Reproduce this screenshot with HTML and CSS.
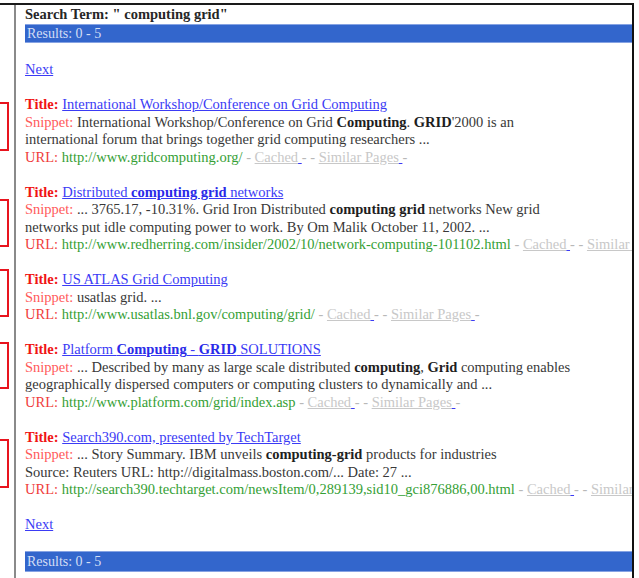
FILE: index.html
```html
<!DOCTYPE html>
<html>
<head>
<meta charset="utf-8">
<title>Search results</title>
<link rel="stylesheet" href="styles.css">
</head>
<body>
<div class="sheet">
  <div class="frame">
    <div class="query">Search Term: " computing grid"</div>
    <div class="bar">Results: 0 - 5</div>
    <div class="nav nav-top"><a href="#">Next</a></div>

    <div class="result r1">
      <div class="line"><span class="lbl-title">Title:</span> <a class="title" href="#">International Workshop/Conference on Grid Computing</a></div>
      <div class="line"><span class="lbl-snip">Snippet:</span> International Workshop/Conference on Grid <b>Computing</b>. <b>GRID</b>'2000 is an<br>international forum that brings together grid computing researchers ...</div>
      <div class="line url"><span class="lbl-url">URL:</span> <span class="addr">http://www.gridcomputing.org/</span> <span class="sep">-</span> <a class="aux" href="#"><span class="word">Cached</span><span class="tail">&nbsp;</span></a><span class="sep">- -</span> <a class="aux" href="#"><span class="word">Similar Pages</span><span class="tail">&nbsp;</span></a><span class="sep">-</span></div>
    </div>

    <div class="result r2">
      <div class="line"><span class="lbl-title">Title:</span> <a class="title" href="#">Distributed <b>computing grid</b> networks</a></div>
      <div class="line"><span class="lbl-snip">Snippet:</span> ... 3765.17, -10.31%. Grid Iron Distributed <b>computing grid</b> networks New grid<br>networks put idle computing power to work. By Om Malik October 11, 2002. ...</div>
      <div class="line url"><span class="lbl-url">URL:</span> <span class="addr">http://www.redherring.com/insider/2002/10/network-computing-101102.html</span> <span class="sep">-</span> <a class="aux" href="#"><span class="word">Cached</span><span class="tail">&nbsp;</span></a><span class="sep">- -</span> <a class="aux" href="#"><span class="word">Similar Pages</span><span class="tail">&nbsp;</span></a><span class="sep">-</span></div>
    </div>

    <div class="result r3">
      <div class="line"><span class="lbl-title">Title:</span> <a class="title" href="#">US ATLAS Grid Computing</a></div>
      <div class="line"><span class="lbl-snip">Snippet:</span> usatlas grid. ...</div>
      <div class="line url"><span class="lbl-url">URL:</span> <span class="addr">http://www.usatlas.bnl.gov/computing/grid/</span> <span class="sep">-</span> <a class="aux" href="#"><span class="word">Cached</span><span class="tail">&nbsp;</span></a><span class="sep">- -</span> <a class="aux" href="#"><span class="word">Similar Pages</span><span class="tail">&nbsp;</span></a><span class="sep">-</span></div>
    </div>

    <div class="result r4">
      <div class="line"><span class="lbl-title">Title:</span> <a class="title" href="#">Platform <b>Computing</b> - <b>GRID</b> SOLUTIONS</a></div>
      <div class="line"><span class="lbl-snip">Snippet:</span> ... Described by many as large scale distributed <b>computing</b>, <b>Grid</b> computing enables<br>geographically dispersed computers or computing clusters to dynamically and ...</div>
      <div class="line url"><span class="lbl-url">URL:</span> <span class="addr">http://www.platform.com/grid/index.asp</span> <span class="sep">-</span> <a class="aux" href="#"><span class="word">Cached</span><span class="tail">&nbsp;</span></a><span class="sep">- -</span> <a class="aux" href="#"><span class="word">Similar Pages</span><span class="tail">&nbsp;</span></a><span class="sep">-</span></div>
    </div>

    <div class="result r5">
      <div class="line"><span class="lbl-title">Title:</span> <a class="title" href="#">Search390.com, presented by TechTarget</a></div>
      <div class="line"><span class="lbl-snip">Snippet:</span> ... Story Summary. IBM unveils <b>computing-grid</b> products for industries<br>Source: Reuters URL: http://digitalmass.boston.com/... Date: 27 ...</div>
      <div class="line url"><span class="lbl-url">URL:</span> <span class="addr">http://search390.techtarget.com/newsItem/0,289139,sid10_gci876886,00.html</span> <span class="sep">-</span> <a class="aux" href="#"><span class="word">Cached</span><span class="tail">&nbsp;</span></a><span class="sep">- -</span> <a class="aux" href="#"><span class="word">Similar</span></a></div>
    </div>

    <div class="nav nav-bottom"><a href="#">Next</a></div>
    <div class="bar bar-bottom">Results: 0 - 5</div>
  </div>
</div>
</body>
</html>
```

FILE: styles.css
```css
html, body {
  margin: 0;
  padding: 0;
  background: #ffffff;
}

body {
  font-family: "Liberation Serif", "Times New Roman", serif;
  font-size: 14.5px;
  color: #383838;
  overflow: hidden;
}

/* outer sheet: the top rule runs past the frame on the left */
.sheet {
  width: 634px;
  height: 580px;
  margin-top: 3px;
  border-top: 2px solid #1a1a1a;
}

.frame {
  margin-left: 14px;
  height: 100%;
  border-left: 2px solid #8a8a8a;
  border-right: 2px solid #111111;
  padding-left: 9px;
}

.query {
  height: 19px;
  line-height: 19px;
  font-weight: bold;
  color: #262626;
}

.bar {
  height: 17px;
  line-height: 17px;
  background: #3366cc;
  border-top: 1px solid #86a3e3;
  border-bottom: 1px solid #86a3e3;
  color: #d4def5;
  font-size: 14px;
  padding-left: 2px;
}

.nav {
  line-height: 17.5px;
}

.nav a,
a.title {
  color: #3b3bf5;
  text-decoration: underline;
}

.nav-top {
  margin-top: 18.25px;
}

.nav-bottom {
  margin-top: 17.5px;
}

.bar-bottom {
  margin-top: 17px;
  height: 19px;
  line-height: 19px;
}

.result {
  position: relative;
  margin-top: 17.5px;
  line-height: 17.5px;
}

.line {
  white-space: nowrap;
}

/* long address lines run into the right edge of the frame */
.url {
  overflow: hidden;
}

.lbl-title {
  color: #f01414;
  font-weight: bold;
}

.lbl-snip {
  color: #ff5a5a;
}

.lbl-url {
  color: #f03c3c;
}

.addr {
  color: #35a035;
}

.sep {
  color: #b8b8b8;
}

.aux {
  text-decoration: none;
}

.aux .word {
  color: #c8c8c8;
  text-decoration: underline;
}

.aux .tail {
  color: #3b3bf5;
  text-decoration: underline;
}

b {
  color: #1e1e1e;
}

a.title b {
  color: #2a2ae8;
}

/* red annotation boxes in the left margin, cut off by the window edge */
.result::before {
  content: "";
  position: absolute;
  left: -65px;
  width: 45px;
  height: 45px;
  border: 2px solid #e8141e;
}

.r1::before { top: 6px; }
.r2::before { top: 15px; height: 44px; }
.r3::before { top: -2px; height: 44px; }
.r4::before { top: 1px; height: 43px; }
.r5::before { top: 10px; }
```
